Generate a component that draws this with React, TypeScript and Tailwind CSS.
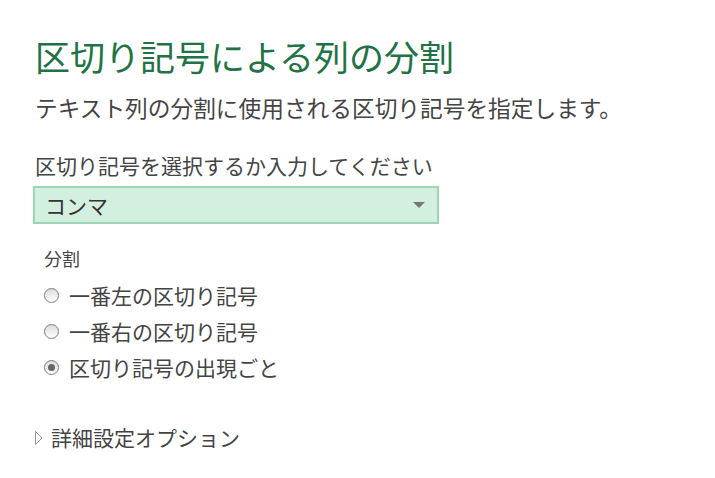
import React from 'react';

const font = { fontFamily: '"Noto Sans CJK JP", "Noto Sans", sans-serif' };

const options = [
    { label: '一番左の区切り記号', checked: false },
    { label: '一番右の区切り記号', checked: false },
    { label: '区切り記号の出現ごと', checked: true },
];

const Radio: React.FC<{ checked: boolean }> = ({ checked }) => (
    <span className="box-border flex h-[15px] w-[15px] shrink-0 items-center justify-center rounded-full border-[1.5px] border-[#7d7d7d] bg-gradient-to-b from-[#dcdcdc] to-white">
        {checked && <span className="h-[7px] w-[7px] rounded-full bg-[#666]" />}
    </span>
);

export default function App() {
    return (
        <div className="h-[478px] w-[715px] bg-white text-[#333]" style={font}>
            <div className="flex flex-col pl-[35px] pt-[34px]">
                {/* Title */}
                <h1 className="text-[35px] leading-[44px] text-[#217346]">区切り記号による列の分割</h1>
                <p className="mt-[15px] text-[22.7px] leading-[30px] text-[#444]">テキスト列の分割に使用される区切り記号を指定します。</p>

                {/* Delimiter select */}
                <label className="mt-[28px] text-[21px] leading-[28px] text-[#444]">区切り記号を選択するか入力してください</label>
                <div className="-ml-[2px] mt-[7px] flex h-[38px] w-[406px] items-center justify-between border-2 border-[#9ed5b5] bg-[#d3efe0] pl-[10px] pr-[12px]">
                    <span className="text-[21px] leading-none text-[#333]">コンマ</span>
                    <svg width="12" height="7" viewBox="0 0 12 7">
                        <path d="M0 0 L12 0 L6 6 Z" fill="#777" />
                    </svg>
                </div>

                {/* Split options */}
                <div className="ml-[9px] mt-[21px] flex flex-col">
                    <span className="text-[18px] leading-[26px] text-[#444]">分割</span>
                    <div className="mt-[10px] flex flex-col gap-[8px]">
                        {options.map((o) => (
                            <div key={o.label} className="flex h-[28px] items-center gap-[10px]">
                                <Radio checked={o.checked} />
                                <span className="text-[21px] leading-none text-[#444]">{o.label}</span>
                            </div>
                        ))}
                    </div>
                </div>

                {/* Advanced */}
                <div className="mt-[46px] flex items-center gap-[8px]">
                    <svg width="8" height="14" viewBox="0 0 8 14">
                        <path d="M0.5 0.5 L7 7 L0.5 13.5 Z" fill="none" stroke="#999" />
                    </svg>
                    <span className="text-[21px] leading-none text-[#444]">詳細設定オプション</span>
                </div>
            </div>
        </div>
    );
}
